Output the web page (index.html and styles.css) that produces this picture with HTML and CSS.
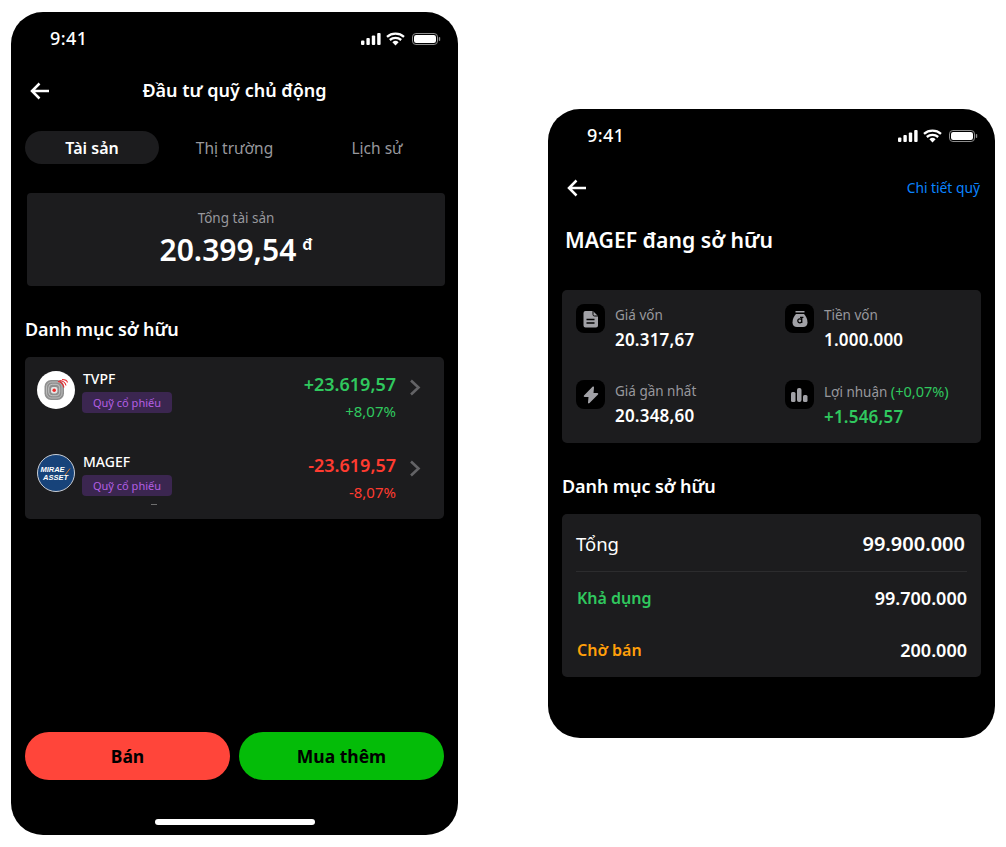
FILE: index.html
```html
<!DOCTYPE html>
<html lang="vi">
<head>
  <meta charset="UTF-8" />
  <meta name="viewport" content="width=device-width, initial-scale=1.0"/>
  <title>Đầu tư quỹ chủ động</title>
  <link rel="stylesheet" href="styles.css">
</head>
<body>

  <div class="canvas">

    <!-- Portfolio screen -->
    <section class="phone phone-main">
      <div class="status-bar">
        <span class="time">9:41</span>
        <svg class="status-icons" width="80" height="14" viewBox="0 0 80 14">
          <rect x="0" y="8.5" width="3.4" height="4.5" rx="1" fill="#fff"/>
          <rect x="5.4" y="6" width="3.4" height="7" rx="1" fill="#fff"/>
          <rect x="10.8" y="3.5" width="3.4" height="9.5" rx="1" fill="#fff"/>
          <rect x="16.2" y="1" width="3.4" height="12" rx="1" fill="#fff"/>
          <path d="M26 4.8a13 13 0 0 1 17 0M28.800 8a8.800 8.800 0 0 1 11.400 0" fill="none" stroke="#fff" stroke-width="2.300"/>
          <path d="M31.400 10.300a4.500 4.500 0 0 1 6.200 0L34.500 13.500z" fill="#fff"/>
          <rect x="51.5" y="1.5" width="25" height="11" rx="3.4" fill="none" stroke="#8e8e8e"/>
          <rect x="53" y="3" width="22" height="8" rx="2.2" fill="#fff"/>
          <rect x="77.8" y="5" width="1.4" height="4" rx=".7" fill="#8e8e8e"/>
        </svg>
      </div>

      <header class="nav nav-center">
        <svg class="back" width="20" height="18" viewBox="0 0 20 18"><path d="M19 9H2M9.5 1.5 2 9l7.5 7.5" fill="none" stroke="#fff" stroke-width="2.5"/></svg>
        <h1 class="nav-title">Đầu tư quỹ chủ động</h1>
      </header>

      <div class="tabs">
        <div class="tab active">Tài sản</div>
        <div class="tab">Thị trường</div>
        <div class="tab">Lịch sử</div>
      </div>

      <div class="total-card">
        <div class="total-label">Tổng tài sản</div>
        <div class="total-value">20.399,54<sup>đ</sup></div>
      </div>

      <h2 class="section-title main-section">Danh mục sở hữu</h2>

      <div class="card fund-list">
        <div class="fund-row">
          <svg class="fund-logo" width="38" height="38" viewBox="0 0 38 38">
            <circle cx="19" cy="19" r="19" fill="#fff"/>
            <rect x="7.500" y="9" width="19.500" height="20" rx="6.500" fill="#8f8f8f"/>
            <rect x="9.500" y="11" width="15.500" height="16" rx="5" fill="none" stroke="#c4c4c4" stroke-width=".8"/>
            <rect x="11.700" y="13.300" width="11" height="11.400" rx="3.500" fill="none" stroke="#cfcfcf" stroke-width=".8"/>
            <rect x="14" y="16" width="6.400" height="6.400" rx="1.800" fill="#e6e6e6"/>
            <circle cx="17.200" cy="19.200" r="1.700" fill="#ee2b2b"/>
            <path d="M21 10.500Q25.500 11 27 16.500M22.500 9.500Q28 10 29 14.500M25 8.500Q30 8.500 30.500 11.500" fill="none" stroke="#e8262b" stroke-width="1.100"/>
          </svg>
          <div class="fund-info">
            <div class="fund-name">TVPF</div>
            <span class="fund-tag">Quỹ cổ phiếu</span>
          </div>
          <div class="fund-nums up">
            <div class="fund-amount">+23.619,57</div>
            <div class="fund-pct">+8,07%</div>
          </div>
          <svg class="chevron" width="12" height="17" viewBox="0 0 12 17"><path d="M2 1.500 9.500 8.500 2 15.500" fill="none" stroke="#636366" stroke-width="2.600"/></svg>
        </div>

        <div class="fund-row fund-row-last">
          <svg class="fund-logo" width="38" height="38" viewBox="0 0 38 38">
            <circle cx="19" cy="19" r="18.500" fill="#17437a" stroke="#c9ced6"/>
            <text class="mirae-text" x="15.500" y="17.500" text-anchor="middle">MIRAE</text>
            <text class="mirae-text" x="18.500" y="25.500" text-anchor="middle">ASSET</text>
            <path d="M28 21 33 14.500" stroke="#ef7d22" stroke-width=".9"/>
          </svg>
          <div class="fund-info">
            <div class="fund-name">MAGEF</div>
            <span class="fund-tag">Quỹ cổ phiếu</span>
          </div>
          <div class="fund-nums down">
            <div class="fund-amount">-23.619,57</div>
            <div class="fund-pct">-8,07%</div>
          </div>
          <svg class="chevron" width="12" height="17" viewBox="0 0 12 17"><path d="M2 1.500 9.500 8.500 2 15.500" fill="none" stroke="#636366" stroke-width="2.600"/></svg>
        </div>
        <div class="clip-mark"></div>
      </div>

      <div class="actions">
        <div class="btn btn-sell">Bán</div>
        <div class="btn btn-buy">Mua thêm</div>
      </div>
      <div class="home-bar"></div>
    </section>

    <!-- Fund detail screen -->
    <section class="phone phone-detail">
      <div class="status-bar">
        <span class="time">9:41</span>
        <svg class="status-icons" width="80" height="14" viewBox="0 0 80 14">
          <rect x="0" y="8.5" width="3.4" height="4.5" rx="1" fill="#fff"/>
          <rect x="5.4" y="6" width="3.4" height="7" rx="1" fill="#fff"/>
          <rect x="10.8" y="3.5" width="3.4" height="9.5" rx="1" fill="#fff"/>
          <rect x="16.2" y="1" width="3.4" height="12" rx="1" fill="#fff"/>
          <path d="M26 4.8a13 13 0 0 1 17 0M28.800 8a8.800 8.800 0 0 1 11.400 0" fill="none" stroke="#fff" stroke-width="2.300"/>
          <path d="M31.400 10.300a4.500 4.500 0 0 1 6.200 0L34.500 13.500z" fill="#fff"/>
          <rect x="51.5" y="1.5" width="25" height="11" rx="3.4" fill="none" stroke="#8e8e8e"/>
          <rect x="53" y="3" width="22" height="8" rx="2.2" fill="#fff"/>
          <rect x="77.8" y="5" width="1.4" height="4" rx=".7" fill="#8e8e8e"/>
        </svg>
      </div>

      <header class="nav nav-split">
        <svg class="back" width="20" height="18" viewBox="0 0 20 18"><path d="M19 9H2M9.5 1.5 2 9l7.5 7.5" fill="none" stroke="#fff" stroke-width="2.5"/></svg>
        <a class="nav-link">Chi tiết quỹ</a>
      </header>

      <h1 class="detail-title">MAGEF đang sở hữu</h1>

      <div class="card stats">
        <div class="stat">
          <div class="stat-icon">
            <svg width="16" height="18" viewBox="0 0 16 18"><path d="M2.500 1H10l5 5v9.500a2 2 0 0 1-2 2H2.500a2 2 0 0 1-2-2v-12.500a2 2 0 0 1 2-2z" fill="#a1a1a6"/><path d="M10 1v3.500a1.500 1.500 0 0 0 1.500 1.500H15" fill="none" stroke="#000"/><path d="M3.500 9.500h8M3.500 13h8" stroke="#000" stroke-width="1.500"/></svg>
          </div>
          <div>
            <div class="stat-label">Giá vốn</div>
            <div class="stat-value">20.317,67</div>
          </div>
        </div>
        <div class="stat">
          <div class="stat-icon">
            <svg width="16" height="18" viewBox="0 0 16 18"><path d="M3.500 1h9v1.500h-9z" fill="#a1a1a6"/><path d="M4 4h8c2 2 3.500 5 3.500 8.500 0 3-2 4.500-4.500 4.500H5c-2.500 0-4.500-1.500-4.500-4.500C.5 9 2 6 4 4z" fill="#a1a1a6"/><path d="M9.800 6.800v6.200M9.800 10.800a2 2 0 1 1-4 0 2 2 0 0 1 4 0zM8 7.400h3.400" fill="none" stroke="#000" stroke-width="1.200"/></svg>
          </div>
          <div>
            <div class="stat-label">Tiền vốn</div>
            <div class="stat-value">1.000.000</div>
          </div>
        </div>
        <div class="stat">
          <div class="stat-icon">
            <svg width="16" height="18" viewBox="0 0 16 18"><path d="M9.500 .8 1 9.500c-.5.600-.2 1.500.7 1.500h3.800L5 16.500c-.1.900.9 1.200 1.500.6L15 8.500c.5-.6.200-1.500-.7-1.500h-3.800L11 1.400c.1-.9-.9-1.200-1.500-.6z" fill="#a1a1a6"/></svg>
          </div>
          <div>
            <div class="stat-label">Giá gần nhất</div>
            <div class="stat-value">20.348,60</div>
          </div>
        </div>
        <div class="stat">
          <div class="stat-icon">
            <svg width="17" height="16" viewBox="0 0 17 16"><rect x="0" y="5" width="4.500" height="10" rx="1.500" fill="#a1a1a6"/><rect x="6" y="1" width="4.500" height="14" rx="2" fill="#a1a1a6"/><rect x="12" y="8" width="4.500" height="7" rx="1.500" fill="#a1a1a6"/></svg>
          </div>
          <div>
            <div class="stat-label">Lợi nhuận <span class="stat-pct">(+0,07%)</span></div>
            <div class="stat-value up">+1.546,57</div>
          </div>
        </div>
      </div>

      <h2 class="section-title detail-section">Danh mục sở hữu</h2>

      <div class="card holdings">
        <div class="holding-total">
          <span>Tổng</span>
          <strong>99.900.000</strong>
        </div>
        <div class="holding-row">
          <span class="up">Khả dụng</span>
          <strong>99.700.000</strong>
        </div>
        <div class="holding-row">
          <span class="pending">Chờ bán</span>
          <strong>200.000</strong>
        </div>
      </div>
    </section>

  </div>

</body>
</html>
```

FILE: styles.css
```css
* {
  box-sizing: border-box;
}

body {
  margin: 0;
  background: #fff;
  color: #fff;
  font-family: "Noto Sans", Arial, sans-serif;
}

h1, h2 {
  margin: 0;
}

.canvas {
  display: flex;
  align-items: flex-start;
  gap: 90px;
  padding: 12px 0 0 11px;
}

.phone {
  display: flex;
  flex-direction: column;
  background: #000;
  border-radius: 32px;
}

.phone-main {
  width: 447px;
  height: 823px;
  padding: 0 14px;
}

.phone-detail {
  width: 447px;
  height: 629px;
  margin-top: 97px;
  padding: 0 14px;
}

/* Status bar */
.status-bar {
  display: flex;
  justify-content: space-between;
  align-items: center;
  height: 54px;
  padding: 0 3px 0 25px;
}

.time {
  margin-top: -2px;
  font-size: 18px;
  font-weight: 500;
  letter-spacing: 0.4px;
}

.up {
  color: #30c85e;
}

.down {
  color: #ff3b30;
}

/* Nav */
.nav {
  position: relative;
  display: flex;
  align-items: center;
  height: 48px;
}

.nav-center {
  justify-content: center;
}

.nav-center .back {
  position: absolute;
  left: 5px;
  top: 16px;
}

.nav-split {
  justify-content: space-between;
  padding: 0 1px 0 5px;
}

.nav-split .back {
  margin-top: 2px;
}

.nav-title {
  font-size: 18px;
  font-weight: 600;
}

.nav-link {
  color: #0a84ff;
  font-size: 13.8px;
}

/* Tabs */
.tabs {
  display: grid;
  grid-template-columns: repeat(3, 134px);
  gap: 8.5px;
  margin-top: 17px;
}

.tab {
  height: 33px;
  line-height: 35px;
  border-radius: 17px;
  text-align: center;
  font-size: 15.5px;
  color: #98989d;
}

.tab.active {
  background: #1c1c1e;
  color: #fff;
  font-size: 16px;
  font-weight: 600;
}

/* Total */
.card {
  background: #1c1c1e;
  border-radius: 5px;
}

.total-card {
  width: 418px;
  height: 93px;
  margin: 29px 0 0 2px;
  padding-top: 14px;
  background: #1c1c1e;
  border-radius: 4px;
  text-align: center;
}

.total-label {
  font-size: 13.5px;
  line-height: 22px;
  color: #98989d;
}

.total-value {
  margin-top: 2px;
  font-size: 30px;
  font-weight: 600;
  line-height: 38px;
}

.total-value sup {
  margin-left: 6px;
  font-size: 16px;
  line-height: 0;
  vertical-align: 11px;
}

.section-title {
  font-size: 18px;
  font-weight: 600;
  line-height: 26px;
  letter-spacing: -0.1px;
}

.main-section {
  margin-top: 30px;
}

/* Fund list */
.fund-list {
  position: relative;
  display: flex;
  flex-direction: column;
  gap: 45px;
  height: 162px;
  margin-top: 15px;
  padding: 14px 23px 0 12px;
}

.fund-row {
  display: flex;
  height: 38px;
}

.fund-logo {
  flex-shrink: 0;
}

.mirae-text {
  fill: #fff;
  font-size: 7.5px;
  font-weight: 700;
  font-style: italic;
  font-family: "Liberation Sans", Arial, sans-serif;
}

.fund-info {
  flex: 1;
  margin-left: 7px;
}

.fund-name {
  margin-left: 1px;
  margin-top: -1px;
  font-size: 14px;
  font-weight: 500;
  line-height: 18px;
}

.fund-tag {
  display: inline-block;
  width: 90px;
  height: 21px;
  margin-top: 4px;
  background: #3b2650;
  border-radius: 4px;
  color: #b45fe3;
  font-size: 11px;
  line-height: 21px;
  text-align: center;
}

.fund-nums {
  text-align: right;
}

.fund-amount {
  font-size: 18px;
  font-weight: 600;
  line-height: 26px;
}

.fund-pct {
  margin-top: 2px;
  font-size: 15px;
  line-height: 24px;
}

.chevron {
  margin: 8px 0 0 13px;
}

.fund-row-last .fund-nums {
  margin-top: -2px;
}

.fund-row-last .chevron {
  margin-top: 6px;
}

/* bit of a clipped line under the last row */
.clip-mark {
  position: absolute;
  left: 126px;
  top: 147px;
  width: 6px;
  height: 1px;
  background: #6e6e6e;
}

/* Bottom */
.actions {
  display: grid;
  grid-template-columns: 205px 205px;
  gap: 9px;
  margin-top: auto;
}

.btn {
  height: 48px;
  line-height: 48px;
  border-radius: 24px;
  text-align: center;
  color: #000;
  font-size: 17.5px;
  font-weight: 700;
}

.btn-sell {
  background: #ff453a;
}

.btn-buy {
  background: #04bc08;
}

.home-bar {
  width: 160px;
  height: 6px;
  margin: 39px auto 10px;
  background: #fff;
  border-radius: 3px;
}

/* Detail */
.detail-title {
  margin: 14px 0 0 3px;
  font-size: 21.2px;
  font-weight: 600;
  line-height: 30px;
}

.stats {
  display: grid;
  grid-template-columns: 209px 1fr;
  grid-auto-rows: 76px;
  height: 153px;
  margin-top: 35px;
  padding: 14px 0 0 14px;
}

.stat {
  display: flex;
  gap: 10px;
}

.stat-icon {
  display: flex;
  justify-content: center;
  align-items: center;
  width: 29px;
  height: 29px;
  background: #000;
  border-radius: 8px;
}

.stat-label {
  font-size: 13.5px;
  line-height: 22px;
  color: #98989d;
}

.stat-pct {
  color: #30c85e;
  font-size: 14.5px;
}

.stat-value {
  margin-top: 2px;
  font-size: 17px;
  font-weight: 600;
  line-height: 24px;
  letter-spacing: 0.2px;
}

.stat-value.up {
  color: #30c85e;
}

.detail-section {
  margin-top: 30px;
}

.holdings {
  height: 163px;
  margin-top: 15px;
  padding: 0 14px;
}

.holding-total {
  display: flex;
  justify-content: space-between;
  align-items: center;
  height: 58px;
  padding: 1px 2px 0 0;
  border-bottom: 1px solid #2c2c2e;
  font-size: 18.5px;
}

.holding-total strong {
  font-size: 20px;
  font-weight: 600;
}

.holding-row {
  display: flex;
  justify-content: space-between;
  align-items: center;
  height: 52px;
  padding-left: 1px;
  font-size: 16px;
  font-weight: 600;
}

.holding-row strong {
  font-size: 18px;
  font-weight: 600;
}

.holding-row .up {
  color: #30c85e;
}

.pending {
  color: #ff9f0a;
}
```
